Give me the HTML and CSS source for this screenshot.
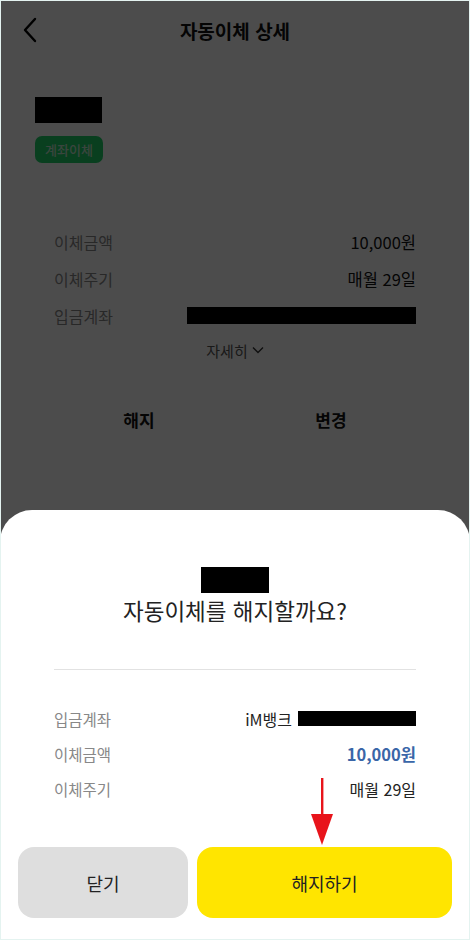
FILE: index.html
```html
<!DOCTYPE html>
<html lang="ko">
<head>
    <meta charset="UTF-8">
    <meta name="viewport" content="width=device-width, initial-scale=1.0">
    <title>자동이체 상세</title>
    <link rel="stylesheet" href="styles.css">
</head>
<body>
    <div class="screen">
        <!-- Detail page underneath the sheet -->
        <header class="top-bar">
            <button class="back-btn" aria-label="뒤로">
                <svg width="16" height="26" viewBox="0 0 16 26">
                    <path d="M13 2 L3 13 L13 24" fill="none" stroke="#000" stroke-width="2.4" stroke-linecap="round" stroke-linejoin="round"/>
                </svg>
            </button>
            <h1>자동이체 상세</h1>
        </header>

        <div class="detail">
            <div class="masked name-mask"></div>
            <span class="badge">계좌이체</span>

            <div class="detail-card">
                <div class="row">
                    <span class="label">이체금액</span>
                    <span class="value">10,000원</span>
                </div>
                <div class="row">
                    <span class="label">이체주기</span>
                    <span class="value">매월 29일</span>
                </div>
                <div class="row">
                    <span class="label">입금계좌</span>
                    <span class="masked account-mask"></span>
                </div>
                <div class="more">
                    자세히
                    <svg width="12" height="8" viewBox="0 0 12 8">
                        <path d="M1 1.5 L6 6.5 L11 1.5" fill="none" stroke="#333" stroke-width="1.4"/>
                    </svg>
                </div>
            </div>

            <div class="card-actions">
                <button>해지</button>
                <button>변경</button>
            </div>
        </div>

        <div class="dim"></div>

        <!-- Cancel confirmation sheet -->
        <section class="sheet">
            <div class="masked sheet-mask"></div>
            <h2>자동이체를 해지할까요?</h2>
            <hr class="divider">

            <div class="sheet-rows">
                <div class="row">
                    <span class="label">입금계좌</span>
                    <span class="value">iM뱅크 <span class="masked bank-mask"></span></span>
                </div>
                <div class="row">
                    <span class="label">이체금액</span>
                    <span class="value amount">10,000원</span>
                </div>
                <div class="row">
                    <span class="label">이체주기</span>
                    <span class="value">매월 29일</span>
                </div>
            </div>

            <div class="sheet-actions">
                <button class="btn-close">닫기</button>
                <button class="btn-cancel">해지하기</button>
            </div>

            <svg class="pointer" width="24" height="68" viewBox="0 0 24 68">
                <rect x="11" y="0" width="2.4" height="40" fill="#e8141b"/>
                <path d="M1 36 L23 36 L12 67 Z" fill="#e8141b"/>
            </svg>
        </section>
    </div>
</body>
</html>
```

FILE: styles.css
```css
/* General Styling */
* {
    box-sizing: border-box;
}

body {
    margin: 0;
    font-family: "Noto Sans CJK KR", "Noto Sans", sans-serif;
    color: #222;
    background-color: #fff;
}

button {
    font-family: inherit;
    border: none;
    background: none;
    cursor: pointer;
}

.screen {
    position: relative;
    width: 470px;
    height: 940px;
    overflow: hidden;
    border: 1px solid #e4f3f0;
    background-color: #fff;
}

.masked {
    display: inline-block;
    background-color: #000;
}

/* Top bar */
.top-bar {
    display: flex;
    align-items: center;
    justify-content: center;
    position: relative;
    height: 58px;
}

.top-bar h1 {
    margin: 0;
    font-size: 19px;
    font-weight: 700;
    color: #111;
}

.back-btn {
    position: absolute;
    left: 21px;
    top: 16px;
    padding: 0;
}

/* Detail page */
.detail {
    padding: 38px 34px 0;
}

.name-mask {
    display: block;
    width: 67px;
    height: 26px;
}

.badge {
    display: inline-block;
    margin-top: 13px;
    padding: 3px 10px;
    border-radius: 7px;
    background-color: #1fd36a;
    color: #c4e8cf;
    font-size: 13px;
    font-weight: 500;
    line-height: 21px;
}

.detail-card {
    margin-top: 60px;
    padding: 0 19px;
}

.row {
    display: flex;
    justify-content: space-between;
    align-items: center;
    height: 37px;
    font-size: 16px;
}

.label {
    color: #888;
}

.value {
    display: flex;
    align-items: center;
    gap: 6px;
    color: #111;
    font-size: 16.5px;
}

.account-mask {
    width: 229px;
    height: 17px;
}

.more {
    display: flex;
    justify-content: center;
    align-items: center;
    gap: 4px;
    height: 32px;
    font-size: 15px;
    color: #555;
}

.card-actions {
    display: flex;
    margin-top: 27px;
    padding: 0 8px;
}

.card-actions button {
    flex: 1;
    height: 52px;
    font-size: 17px;
    font-weight: 700;
    color: #111;
}

/* Dim layer over the page */
.dim {
    position: absolute;
    inset: 0;
    background-color: rgba(0, 0, 0, 0.7);
}

/* Bottom sheet */
.sheet {
    position: absolute;
    left: -1px;
    right: -1px;
    bottom: 0;
    height: 429px;
    padding: 57px 18px 0;
    background-color: #fff;
    border-radius: 32px 32px 0 0;
    text-align: center;
}

.sheet-mask {
    display: block;
    width: 68px;
    height: 26px;
    margin: 0 auto;
}

.sheet h2 {
    margin: 0;
    font-size: 22.5px;
    font-weight: 400;
    line-height: 34px;
    color: #222;
}

.divider {
    margin: 42px 36px 0;
    border: none;
    border-top: 1px solid #e2e2e2;
}

.sheet-rows {
    margin-top: 31px;
    padding: 0 36px;
}

.sheet-rows .row {
    height: 35px;
    font-size: 15.5px;
}

.sheet-rows .value {
    font-size: 16px;
    color: #222;
}

.bank-mask {
    width: 118px;
    height: 15px;
}

.sheet-rows .value.amount {
    color: #3a66a8;
    font-weight: 700;
    font-size: 16.5px;
}

.sheet-actions {
    display: flex;
    gap: 9px;
    margin-top: 41px;
}

.sheet-actions button {
    height: 71px;
    border-radius: 16px;
    font-size: 18px;
    color: #222;
}

.btn-close {
    width: 170px;
    background-color: #dedede;
}

.btn-cancel {
    flex: 1;
    background-color: #ffe500;
}

/* Red arrow pointing at the confirm button */
.pointer {
    position: absolute;
    left: 310px;
    top: 268px;
}
```
